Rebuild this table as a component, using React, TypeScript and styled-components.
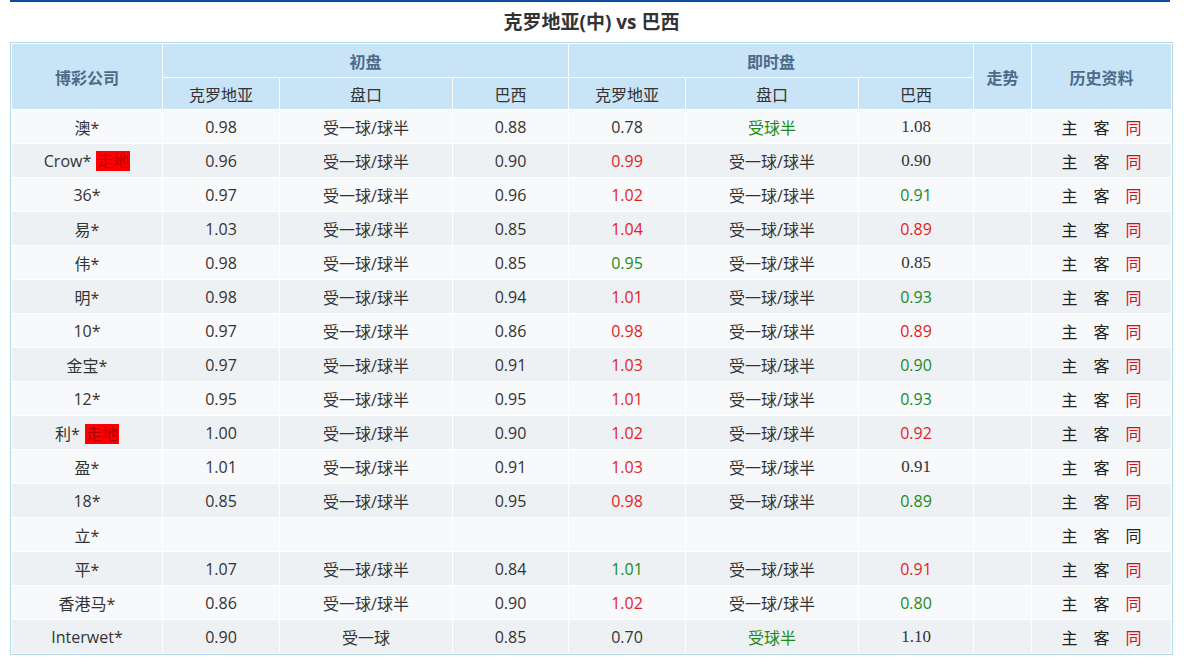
import React from "react";
import styled, { createGlobalStyle } from "styled-components";

type Tone = "red" | "green" | undefined;

type Cell = { v: string; tone?: Tone };

type Row = {
	name: string;
	live?: boolean;
	init: [string, string, string];
	now: [Cell, Cell, Cell];
	same?: boolean;
};

const L = "受一球/球半";

const rows: Row[] = [
	{ name: "澳*", init: ["0.98", L, "0.88"], now: [{ v: "0.78" }, { v: "受球半", tone: "green" }, { v: "1.08" }] },
	{ name: "Crow*", live: true, init: ["0.96", L, "0.90"], now: [{ v: "0.99", tone: "red" }, { v: L }, { v: "0.90" }] },
	{ name: "36*", init: ["0.97", L, "0.96"], now: [{ v: "1.02", tone: "red" }, { v: L }, { v: "0.91", tone: "green" }] },
	{ name: "易*", init: ["1.03", L, "0.85"], now: [{ v: "1.04", tone: "red" }, { v: L }, { v: "0.89", tone: "red" }] },
	{ name: "伟*", init: ["0.98", L, "0.85"], now: [{ v: "0.95", tone: "green" }, { v: L }, { v: "0.85" }] },
	{ name: "明*", init: ["0.98", L, "0.94"], now: [{ v: "1.01", tone: "red" }, { v: L }, { v: "0.93", tone: "green" }] },
	{ name: "10*", init: ["0.97", L, "0.86"], now: [{ v: "0.98", tone: "red" }, { v: L }, { v: "0.89", tone: "red" }] },
	{ name: "金宝*", init: ["0.97", L, "0.91"], now: [{ v: "1.03", tone: "red" }, { v: L }, { v: "0.90", tone: "green" }] },
	{ name: "12*", init: ["0.95", L, "0.95"], now: [{ v: "1.01", tone: "red" }, { v: L }, { v: "0.93", tone: "green" }] },
	{ name: "利*", live: true, init: ["1.00", L, "0.90"], now: [{ v: "1.02", tone: "red" }, { v: L }, { v: "0.92", tone: "red" }] },
	{ name: "盈*", init: ["1.01", L, "0.91"], now: [{ v: "1.03", tone: "red" }, { v: L }, { v: "0.91" }] },
	{ name: "18*", init: ["0.85", L, "0.95"], now: [{ v: "0.98", tone: "red" }, { v: L }, { v: "0.89", tone: "green" }] },
	{ name: "立*", init: ["", "", ""], now: [{ v: "" }, { v: "" }, { v: "" }], same: true },
	{ name: "平*", init: ["1.07", L, "0.84"], now: [{ v: "1.01", tone: "green" }, { v: L }, { v: "0.91", tone: "red" }] },
	{ name: "香港马*", init: ["0.86", L, "0.90"], now: [{ v: "1.02", tone: "red" }, { v: L }, { v: "0.80", tone: "green" }] },
	{ name: "Interwet*", init: ["0.90", "受一球", "0.85"], now: [{ v: "0.70" }, { v: "受球半", tone: "green" }, { v: "1.10" }] },
];

const colWidths = [150, 116, 172, 115, 116, 172, 114, 57, 139];

const GlobalStyle = createGlobalStyle`
	body {
		margin: 0;
		background: #fff;
		font-family: "Open Sans", "Noto Sans CJK SC", sans-serif;
		color: #333;
	}
`;

const Page = styled.div`
	width: 1163px;
	margin-left: 10px;
`;

const TopBar = styled.div`
	height: 2px;
	width: 1160px;
	background: #0b4d9c;
`;

const Title = styled.h1`
	margin: 0;
	height: 40px;
	line-height: 40px;
	text-align: center;
	font-size: 19px;
	font-weight: bold;
	color: #333;
`;

const Table = styled.table`
	width: 1163px;
	table-layout: fixed;
	border: 1px solid #b5d7ea;
	border-spacing: 1px;
	background: #fff;
`;

const Head = styled.th<{ $strong?: boolean; $h: number }>`
	height: ${(p) => p.$h}px;
	padding: 0;
	background: #c9e4f7;
	font-size: 16px;
	font-weight: ${(p) => (p.$strong ? "bold" : "normal")};
	color: ${(p) => (p.$strong ? "#4d6a88" : "#333")};
	text-align: center;
	vertical-align: middle;
`;

const Tr = styled.tr<{ $alt: boolean }>`
	background: ${(p) => (p.$alt ? "#eef1f4" : "#f8f9fb")};
`;

const Td = styled.td<{ $tone?: Tone; $serif?: boolean }>`
	height: 33px;
	padding: 0;
	text-align: center;
	font-size: ${(p) => (p.$serif ? "17px" : "16px")};
	font-family: ${(p) =>
		p.$serif ? '"Liberation Serif", "DejaVu Serif", serif' : "inherit"};
	color: ${(p) =>
		p.$tone === "red" ? "#e21d25" : p.$tone === "green" ? "#1b8a1b" : "#333"};
`;

const LiveTag = styled.span`
	display: inline-block;
	margin-left: 5px;
	padding: 0 1px;
	line-height: 20px;
	background: #ff0000;
	color: #b30000;
	font-size: 16px;
`;

const History = styled.span`
	display: inline-flex;
	gap: 16px;
	font-size: 16px;
`;

const Link = styled.span<{ $red?: boolean }>`
	color: ${(p) => (p.$red ? "#d0101a" : "#222")};
`;

export default function App() {
	return (
		<>
			<GlobalStyle />
			<Page>
				<TopBar />
				<Title>克罗地亚(中) vs 巴西</Title>
				<Table>
					<colgroup>
						{colWidths.map((w, i) => (
							<col key={i} style={{ width: w }} />
						))}
					</colgroup>
					<thead>
						<tr>
							<Head $strong $h={33} rowSpan={2}>
								博彩公司
							</Head>
							<Head $strong $h={33} colSpan={3}>
								初盘
							</Head>
							<Head $strong $h={33} colSpan={3}>
								即时盘
							</Head>
							<Head $strong $h={33} rowSpan={2}>
								走势
							</Head>
							<Head $strong $h={33} rowSpan={2}>
								历史资料
							</Head>
						</tr>
						<tr>
							<Head $h={31}>克罗地亚</Head>
							<Head $h={31}>盘口</Head>
							<Head $h={31}>巴西</Head>
							<Head $h={31}>克罗地亚</Head>
							<Head $h={31}>盘口</Head>
							<Head $h={31}>巴西</Head>
						</tr>
					</thead>
					<tbody>
						{rows.map((r, i) => (
							<Tr key={r.name} $alt={i % 2 === 1}>
								<Td>
									{r.name}
									{r.live && <LiveTag>走地</LiveTag>}
								</Td>
								{r.init.map((v, j) => (
									<Td key={j}>{v}</Td>
								))}
								{r.now.map((c, j) => (
									<Td key={j} $tone={c.tone} $serif={j === 2 && !c.tone}>
										{c.v}
									</Td>
								))}
								<Td />
								<Td>
									<History>
										<Link>主</Link>
										<Link>客</Link>
										<Link $red={!r.same}>同</Link>
									</History>
								</Td>
							</Tr>
						))}
					</tbody>
				</Table>
			</Page>
		</>
	);
}
